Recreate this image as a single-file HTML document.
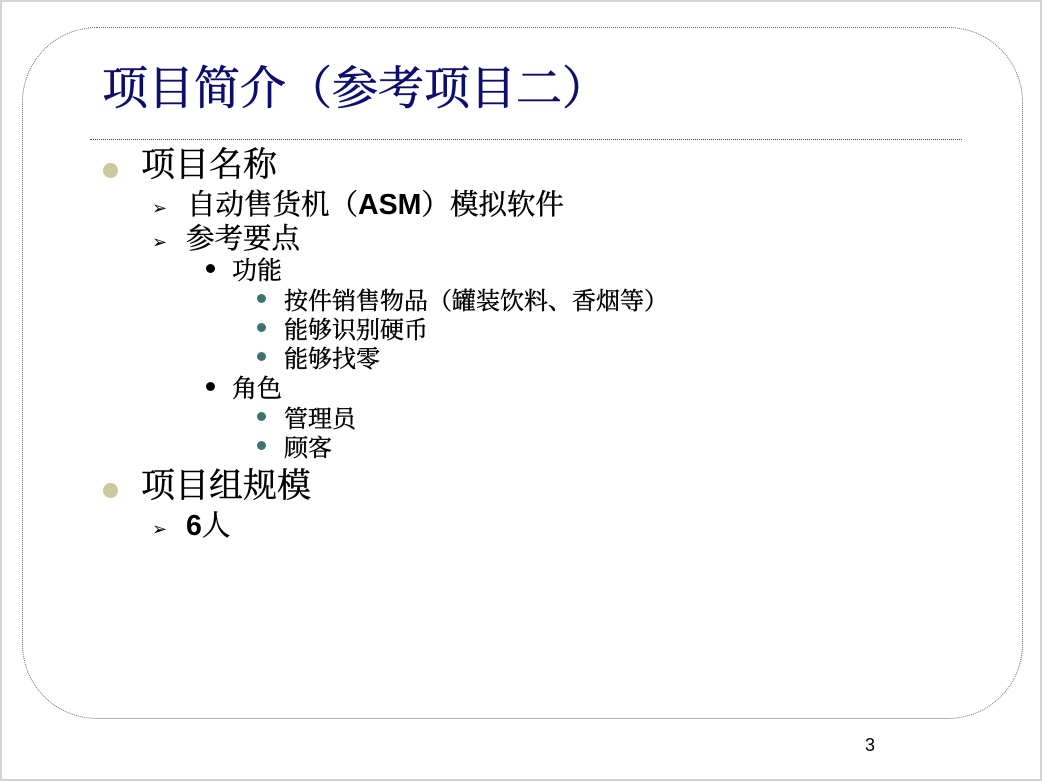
<!DOCTYPE html>
<html><head><meta charset="utf-8"><style>
html,body{margin:0;padding:0;}
body{width:1042px;height:781px;position:relative;background:#fff;overflow:hidden;font-family:"Liberation Serif","Noto Serif CJK SC",serif;}
.frame{position:absolute;left:0;top:0;width:1038px;height:777px;border:2px solid #d4d4d4;}
.rr{position:absolute;left:22px;top:27px;width:999px;height:690px;border:1px dotted #666;border-radius:75px;}
.hr{position:absolute;left:90px;top:139px;width:872px;border-top:1px dotted #444;}
.t{position:absolute;white-space:nowrap;line-height:1;color:#000;-webkit-text-stroke:0.4px #000;}
.title{left:102px;top:66px;font-size:46px;color:#0d0d6b;-webkit-text-stroke:0.6px #0d0d6b;}
.l1{font-size:34px;}
.l2{font-size:28.5px;}
.l3{font-size:25px;}
.l4{font-size:24px;}
.b1{position:absolute;width:15px;height:15px;border-radius:50%;background:#c9c99c;}
.b3{position:absolute;width:9px;height:9px;border-radius:50%;background:#000;}
.b4{position:absolute;width:9px;height:9px;border-radius:50%;background:#3d7373;}
.ar{position:absolute;font-size:18px;font-family:"DejaVu Sans",sans-serif;line-height:1;font-weight:bold;}
b{font-family:"Liberation Sans",sans-serif;-webkit-text-stroke:0;}
</style></head><body>
<div class="frame"></div>
<div class="rr"></div>
<div class="t title">项目简介（参考项目二）</div>
<div class="hr"></div>

<div class="b1" style="left:103px;top:163px"></div>
<div class="t l1" style="left:141px;top:149px">项目名称</div>
<div class="ar" style="left:152px;top:200px">➢</div>
<div class="t l2" style="left:187px;top:191px">自动售货机（<b>ASM</b>）模拟软件</div>
<div class="ar" style="left:152px;top:234px">➢</div>
<div class="t l2" style="left:186px;top:226px">参考要点</div>

<div class="b3" style="left:206px;top:264px"></div>
<div class="t l3" style="left:232px;top:259px">功能</div>
<div class="b4" style="left:257px;top:294px"></div>
<div class="t l4" style="left:284px;top:290px">按件销售物品（罐装饮料、香烟等）</div>
<div class="b4" style="left:257px;top:323px"></div>
<div class="t l4" style="left:284px;top:319px">能够识别硬币</div>
<div class="b4" style="left:257px;top:352px"></div>
<div class="t l4" style="left:284px;top:348px">能够找零</div>
<div class="b3" style="left:206px;top:382px"></div>
<div class="t l3" style="left:232px;top:377px">角色</div>
<div class="b4" style="left:257px;top:412px"></div>
<div class="t l4" style="left:284px;top:408px">管理员</div>
<div class="b4" style="left:257px;top:441px"></div>
<div class="t l4" style="left:284px;top:437px">顾客</div>

<div class="b1" style="left:103px;top:483px"></div>
<div class="t l1" style="left:141px;top:470px">项目组规模</div>
<div class="ar" style="left:152px;top:521px">➢</div>
<div class="t l2" style="left:186px;top:512px"><b>6</b>人</div>

<div class="t" style="left:865px;top:736px;font-size:18px;font-family:'Liberation Sans',sans-serif;-webkit-text-stroke:0">3</div>
</body></html>
